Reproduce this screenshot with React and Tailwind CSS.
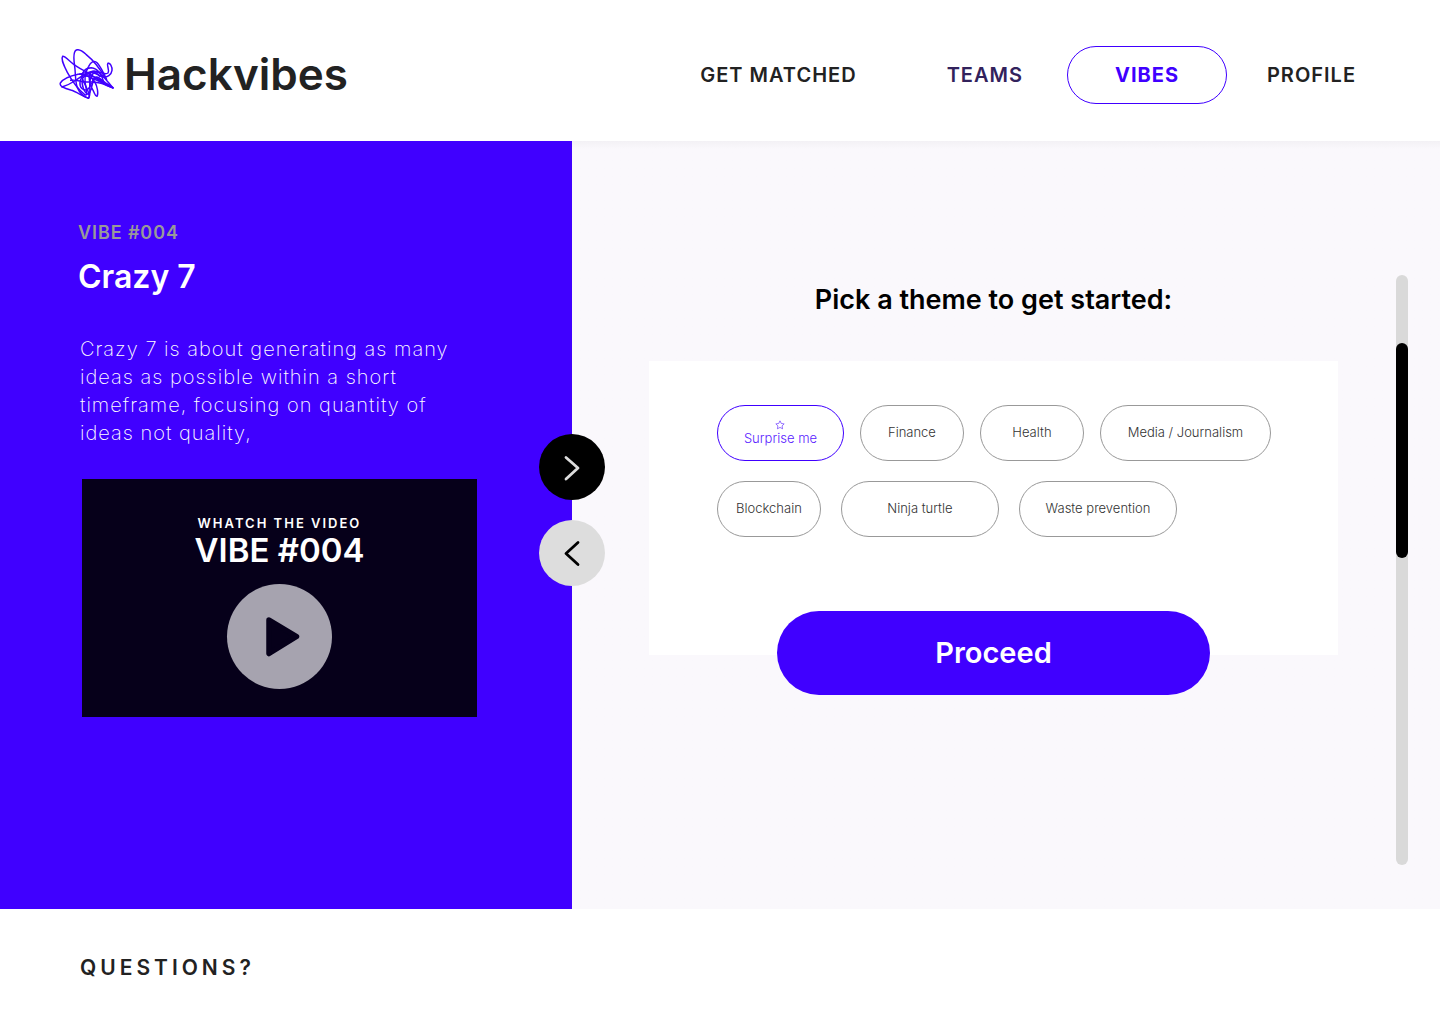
import React from 'react';

const themeRows = [
  {
    gap: 'gap-4',
    themes: [
      { name: 'Finance', width: 'w-[104px]' },
      { name: 'Health', width: 'w-[104px]' },
      { name: 'Media / Journalism', width: 'w-[171px]' },
    ],
  },
  {
    gap: 'gap-5',
    themes: [
      { name: 'Blockchain', width: 'w-[104px]' },
      { name: 'Ninja turtle', width: 'w-[158px]' },
      { name: 'Waste prevention', width: 'w-[158px]' },
    ],
  },
];

function Logo() {
  return (
    <svg
      viewBox="27 26 165 153"
      className="w-[55px] h-[51px] shrink-0"
      fill="none"
      stroke="#4000ff"
      strokeWidth="4.4"
      strokeLinecap="round"
      strokeLinejoin="round"
      aria-hidden="true"
    >
      <path d="M168 116C152 88 128 58 108 42C96 31 86 26 79 29C69 34 71 58 74 78C77 98 75 122 82 142C89 158 104 170 115 174C124 168 117 144 120 122C122 104 132 92 144 96C158 102 174 126 189 143" />
      <path d="M189 143C166 134 150 126 136 112C118 98 98 90 80 78C62 68 46 46 38 48C33 54 42 78 52 96C64 118 84 146 104 163C110 168 112 158 108 142C103 122 104 98 116 78C122 66 132 58 142 68C154 82 162 100 170 118" />
      <path d="M150 108C128 90 104 98 84 102C60 107 38 118 31 128C27 138 44 144 62 149C82 154 98 170 116 173C124 160 102 132 96 112C94 96 106 82 124 82C144 84 156 104 160 122" />
      <path d="M62 120C72 118 80 120 88 122C110 128 134 122 156 130C168 134 180 140 189 142C168 126 142 116 122 106C106 98 92 108 90 126C88 142 100 152 112 148C124 140 126 114 138 110C148 108 160 124 172 132" />
      <path d="M174 69C180 66 187 80 186 90C184 104 172 112 158 110C142 106 138 90 126 94C112 102 118 132 128 148C134 158 136 170 141 168C146 160 142 138 134 124C124 108 104 100 98 114C92 134 104 158 114 162C124 158 124 134 132 118C138 108 150 120 164 128" />
      <path d="M174 69C168 74 180 88 174 98C164 106 148 92 132 92C110 94 92 110 74 122C62 130 48 136 36 140M88 102C98 100 106 104 114 108C138 120 156 126 176 136" />
    </svg>
  );
}

function Header() {
  return (
    <header className="flex items-center justify-between bg-white pl-[59px] pr-[84px] pt-[46px] pb-[37px]">
      <a href="#home" className="flex items-center gap-[10px] pb-[2px] text-[#222222]">
        <Logo />
        <span className="text-[44px] leading-[56px] font-semibold">Hackvibes</span>
      </a>
      <nav className="flex items-center text-xl font-semibold tracking-wider text-[#222222]">
        <a href="#matched">GET MATCHED</a>
        <a href="#teams" className="ml-[90px] text-[#32225c]">TEAMS</a>
        <a
          href="#vibes"
          className="ml-11 w-40 h-[58px] flex items-center justify-center rounded-full border border-[#4000ff] text-[#4000ff] font-bold"
        >
          VIBES
        </a>
        <a href="#profile" className="ml-10">PROFILE</a>
      </nav>
    </header>
  );
}

function VibePanel() {
  return (
    <section className="relative w-[39.72%] shrink-0 bg-[#4000ff] text-white pl-[78px] pr-[95px] pt-[78px] pb-48">
      <p className="text-lg leading-7 font-semibold tracking-wider text-[#999999]">VIBE #004</p>
      <h1 className="mt-2 text-[32px] leading-[44px] font-semibold">Crazy 7</h1>
      <p className="mt-9 ml-[2px] max-w-[380px] text-xl leading-7 font-extralight tracking-wider">
        Crazy 7 is about generating as many ideas as possible within a short timeframe, focusing on
        quantity of ideas not quality,
      </p>

      {/* Video */}
      <div className="mt-8 ml-1 flex flex-col items-center bg-[#06001a] pt-[35px] pb-7">
        <p className="text-[13px] leading-[18px] font-semibold tracking-[2px]">WHATCH THE VIDEO</p>
        <h2 className="text-[33px] leading-9 font-semibold">VIBE #004</h2>
        <button
          type="button"
          aria-label="Play video"
          className="mt-4 size-[105px] flex items-center justify-center rounded-full bg-[#a6a3af]"
        >
          <svg viewBox="0 0 105 105" className="size-full" aria-hidden="true">
            <path d="M42 36L69.500 52.500L42 69.500Z" fill="#06001a" stroke="#06001a" strokeWidth="5.500" strokeLinejoin="round" />
          </svg>
        </button>
      </div>

      {/* Next / previous sit on the edge of the panel */}
      <div className="absolute z-10 top-[293px] -right-[33px] flex flex-col gap-5">
        <button type="button" aria-label="Next" className="size-[66px] rounded-full bg-black">
          <svg viewBox="0 0 66 66" fill="none" stroke="#dddddd" strokeWidth="2.800" strokeLinecap="round" strokeLinejoin="round" aria-hidden="true">
            <path d="M27 23.500L39 34L27 45" />
          </svg>
        </button>
        <button type="button" aria-label="Previous" className="size-[66px] rounded-full bg-[#dddddd]">
          <svg viewBox="0 0 66 66" fill="none" stroke="#000000" strokeWidth="2.800" strokeLinecap="round" strokeLinejoin="round" aria-hidden="true">
            <path d="M39 22.500L27 33.500L39 44.500" />
          </svg>
        </button>
      </div>
    </section>
  );
}

function Theme({ name, width }) {
  return (
    <button
      type="button"
      className={`${width} h-14 rounded-full border border-[#999999] text-[13px] font-light text-[#333333] whitespace-nowrap`}
    >
      {name}
    </button>
  );
}

function ThemePicker() {
  return (
    <section className="flex-1 flex bg-linear-to-b from-[#f3f1f5] to-[#faf8fc] to-[8px] pl-[77px] pr-8">
      <div className="flex-1 flex flex-col items-center pt-[139px]">
        <h2 className="text-[27px] leading-10 font-semibold text-black">Pick a theme to get started:</h2>
        <div className="mt-[41px] w-full bg-white pl-[68px] pt-11 pb-[118px] flex flex-col gap-5">
          {themeRows.map((row, i) => (
            <div key={i} className={`flex ${row.gap}`}>
              {i === 0 && (
                <button
                  type="button"
                  className="w-[127px] h-14 flex flex-col items-center justify-center rounded-full border border-[#4000ff] text-[13px] leading-4 font-light text-[#5a22ff]"
                >
                  <svg viewBox="0 0 24 24" className="size-[10px]" fill="none" stroke="currentColor" strokeWidth="1.500" strokeLinejoin="round" aria-hidden="true">
                    <path d="M12 2l3.100 6.300 6.900 1-5 4.900 1.200 6.900L12 17.800 5.800 21.100 7 14.200 2 9.300l6.900-1z" />
                  </svg>
                  Surprise me
                </button>
              )}
              {row.themes.map((theme) => (
                <Theme key={theme.name} name={theme.name} width={theme.width} />
              ))}
            </div>
          ))}
        </div>
        <button
          type="button"
          className="-mt-11 w-[433px] h-[84px] rounded-full bg-[#4000ff] text-white text-[29px] font-semibold"
        >
          Proceed
        </button>
      </div>

      {/* Scroll track */}
      <div className="ml-[58px] mt-[134px] mb-11 w-3 rounded-full bg-[#d9d9d9]">
        <div className="mt-[68px] w-full h-[215px] rounded-full bg-black"></div>
      </div>
    </section>
  );
}

function App() {
  return (
    <div className="min-h-screen bg-white font-['Inter',sans-serif]">
      <Header />
      <main className="flex">
        <VibePanel />
        <ThemePicker />
      </main>
      <footer className="px-20 pt-11 pb-10">
        <h2 className="text-[21px] leading-[30px] font-semibold tracking-[4px] text-[#222222]">QUESTIONS?</h2>
      </footer>
    </div>
  );
}

export default App;
